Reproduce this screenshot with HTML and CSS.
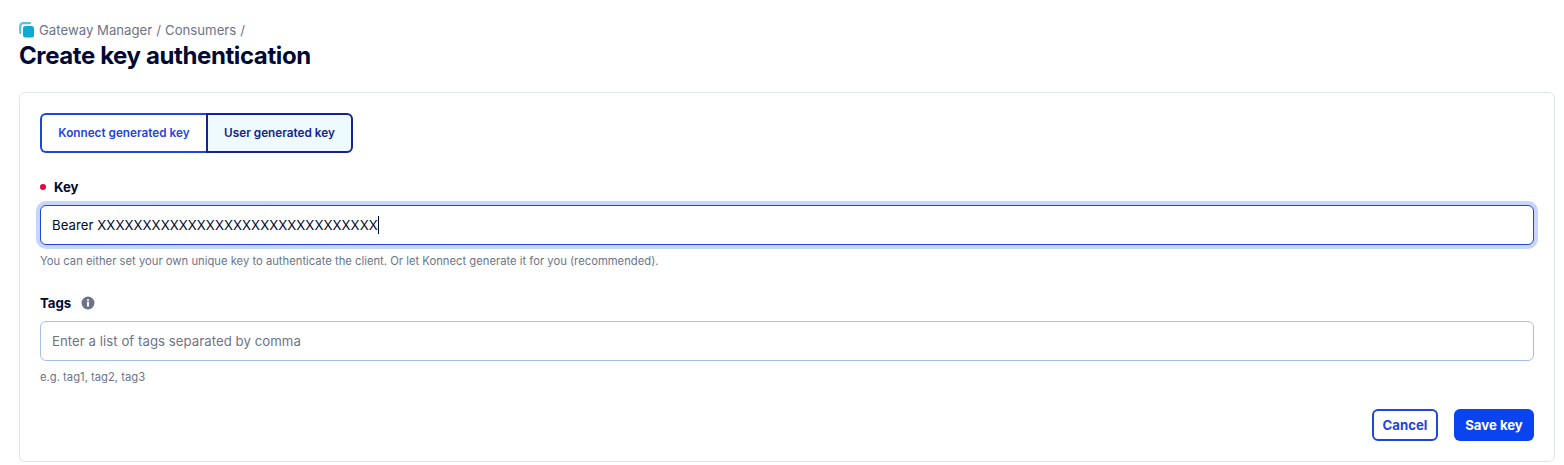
FILE: index.html
```html
<!DOCTYPE html>
<html lang="en">
<head>
  <meta charset="UTF-8">
  <title>Create key authentication</title>
  <link rel="stylesheet" href="styles.css">
</head>
<body>

<header class="page-header">
  <nav class="breadcrumbs">
    <svg class="crumb-icon" width="16" height="16" viewBox="0 0 16 16">
      <path d="M1.2 11V4.2a3 3 0 0 1 3-3H11" fill="none" stroke="#56c2dc" stroke-width="2.2" stroke-linecap="round"/>
      <rect x="4" y="4" width="11" height="11.5" rx="2.5" fill="#0ea8d0"/>
    </svg>
    <span>Gateway Manager</span>
    <span class="sep">/</span>
    <span>Consumers</span>
    <span class="sep">/</span>
  </nav>
  <h1>Create key authentication</h1>
</header>

<main class="card">
  <div class="segmented">
    <button class="segment">Konnect generated key</button>
    <button class="segment active">User generated key</button>
  </div>

  <div class="field field-key">
    <label class="label"><span class="required"></span>Key</label>
    <div class="input focused">Bearer XXXXXXXXXXXXXXXXXXXXXXXXXXXXXXX<span class="caret"></span></div>
    <p class="help">You can either set your own unique key to authenticate the client. Or let Konnect generate it for you (recommended).</p>
  </div>

  <div class="field field-tags">
    <label class="label">Tags
      <svg class="info" width="14" height="14" viewBox="0 0 14 14">
        <circle cx="7" cy="7" r="6.5" fill="#6c7489"/>
        <rect x="6" y="6" width="2" height="4.5" fill="#fff"/>
        <rect x="6" y="3.4" width="2" height="1.8" fill="#fff"/>
      </svg>
    </label>
    <div class="input placeholder">Enter a list of tags separated by comma</div>
    <p class="help">e.g. tag1, tag2, tag3</p>
  </div>

  <div class="actions">
    <button class="btn btn-outline">Cancel</button>
    <button class="btn btn-primary">Save key</button>
  </div>
</main>

</body>
</html>
```

FILE: styles.css
```css
* {
  box-sizing: border-box;
}

body {
  margin: 0;
  background-color: #fff;
  color: #000933;
  font-family: Inter, 'Liberation Sans', sans-serif;
}

.page-header {
  padding: 22px 19px 0;
}

.breadcrumbs {
  display: flex;
  align-items: center;
  gap: 4px;
  height: 16px;
  color: #6c7489;
  font-size: 13.2px;
}

h1 {
  margin: 2px 0 0;
  font-size: 24px;
  line-height: 32px;
  font-weight: 700;
  letter-spacing: -0.4px;
}

.card {
  margin: 20px 9px 0 19px;
  padding: 20px;
  height: 370px;
  border: 1px solid #e0e4ea;
  border-radius: 6px;
}

.segmented {
  display: flex;
}

button {
  font-family: inherit;
  cursor: pointer;
  white-space: nowrap;
}

.segment {
  height: 40px;
  padding: 0;
  background-color: #fff;
  border: 2px solid #1f45dc;
  color: #1f45dc;
  font-size: 11.75px;
  font-weight: 600;
}

.segment:first-child {
  width: 166px;
  border-right: none;
  border-radius: 6px 0 0 6px;
}

.segment.active {
  width: 147px;
  background-color: #eefaff;
  border-color: #14238f;
  color: #14238f;
  border-radius: 0 6px 6px 0;
}

.field-key {
  margin-top: 26px;
}

.field-tags {
  margin-top: 26px;
}

.label {
  display: flex;
  align-items: center;
  height: 16px;
  font-size: 13.2px;
  font-weight: 700;
}

.required {
  width: 6px;
  height: 6px;
  margin-right: 8px;
  border-radius: 50%;
  background-color: #e6003e;
}

.info {
  margin-left: 10px;
}

.input {
  display: flex;
  align-items: center;
  height: 40px;
  margin-top: 10px;
  padding: 0 11px;
  border: 1px solid #a8bde6;
  border-radius: 6px;
  background-color: #fff;
  font-size: 13.2px;
  letter-spacing: 0.05px;
  color: #000933;
}

.input.focused {
  border-color: #1f45dc;
  box-shadow: 0 0 0 4px #c9d6fb;
}

.input.placeholder {
  color: #6c7489;
}

.caret {
  width: 1px;
  height: 18px;
  background-color: #000933;
}

.help {
  margin: 8px 0 0;
  color: #6c7489;
  font-size: 11.25px;
  line-height: 16px;
}

.actions {
  display: flex;
  justify-content: flex-end;
  gap: 16px;
  margin-top: 24px;
}

.btn {
  height: 32px;
  padding: 0;
  border-radius: 6px;
  font-size: 13.2px;
  font-weight: 700;
}

.btn-outline {
  width: 66px;
  background-color: #fff;
  border: 2px solid #1f45dc;
  color: #1f45dc;
}

.btn-primary {
  width: 80px;
  background-color: #0a44f0;
  border: none;
  color: #fff;
}
```
